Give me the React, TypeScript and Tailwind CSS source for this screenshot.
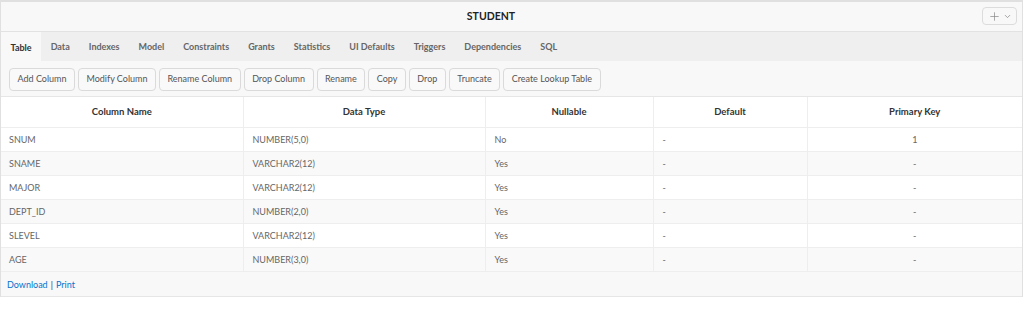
import { Plus, ChevronDown } from 'lucide-react';

const tabs = ['Table', 'Data', 'Indexes', 'Model', 'Constraints', 'Grants', 'Statistics', 'UI Defaults', 'Triggers', 'Dependencies', 'SQL'];

const actions = ['Add Column', 'Modify Column', 'Rename Column', 'Drop Column', 'Rename', 'Copy', 'Drop', 'Truncate', 'Create Lookup Table'];

const rows = [
    { name: 'SNUM', type: 'NUMBER(5,0)', nullable: 'No', def: '-', pk: '1' },
    { name: 'SNAME', type: 'VARCHAR2(12)', nullable: 'Yes', def: '-', pk: '-' },
    { name: 'MAJOR', type: 'VARCHAR2(12)', nullable: 'Yes', def: '-', pk: '-' },
    { name: 'DEPT_ID', type: 'NUMBER(2,0)', nullable: 'Yes', def: '-', pk: '-' },
    { name: 'SLEVEL', type: 'VARCHAR2(12)', nullable: 'Yes', def: '-', pk: '-' },
    { name: 'AGE', type: 'NUMBER(3,0)', nullable: 'Yes', def: '-', pk: '-' },
];

export default function App() {
    return (
        <div className="h-[311px] w-[1024px] bg-white text-[9px] text-[#666]" style={{ fontFamily: 'Lato, "Noto Sans", sans-serif' }}>
            <div className="w-[1023px] border-x border-t-2 border-[#e0e0e0]">
                {/* region header */}
                <div className="relative flex h-[30px] items-center border-b border-[#e2e2e2] bg-[#f8f8f8]">
                    <div className="w-[980px] text-center text-[10.5px] font-bold text-[#222]">STUDENT</div>
                    <button className="absolute right-[5px] top-[5px] flex h-[18px] w-[35px] items-center justify-center gap-[2px] rounded-sm border border-[#dcdcdc] bg-[#f8f8f8] text-[#888]">
                        <Plus className="h-[13px] w-[13px]" strokeWidth={1.3} />
                        <ChevronDown className="h-[9px] w-[9px]" strokeWidth={2} />
                    </button>
                </div>

                {/* tabs */}
                <div className="flex h-[29px] bg-[#efefef]">
                    {tabs.map((t, i) => (
                        <div
                            key={t}
                            className={
                                i === 0
                                    ? 'flex h-[30px] items-center bg-[#f8f8f8] px-[9.5px] pt-px font-bold text-[#333]'
                                    : 'flex items-center px-[9.5px] pt-px font-bold text-[#666]'
                            }
                        >
                            {t}
                        </div>
                    ))}
                </div>

                {/* toolbar */}
                <div className="flex h-[36px] items-center gap-[3px] border-b border-[#e6e6e6] bg-[#f8f8f8] px-[8px] pt-px">
                    {actions.map((a) => (
                        <button key={a} className="h-[23px] rounded-sm border border-[#dadada] bg-[#f9f9f9] px-[7.5px] text-[#555]">
                            {a}
                        </button>
                    ))}
                </div>

                {/* columns table */}
                <table className="w-full table-fixed border-collapse">
                    <colgroup>
                        <col className="w-[242px]" />
                        <col className="w-[242px]" />
                        <col className="w-[168px]" />
                        <col className="w-[154px]" />
                        <col />
                    </colgroup>
                    <thead>
                        <tr className="h-[30px] border-b border-[#eeeeee] bg-white text-[9.5px]">
                            <th className="border-r border-[#eeeeee] pt-px font-bold text-[#333]">Column Name</th>
                            <th className="border-r border-[#eeeeee] pt-px font-bold text-[#333]">Data Type</th>
                            <th className="border-r border-[#eeeeee] pt-px font-bold text-[#333]">Nullable</th>
                            <th className="border-r border-[#eeeeee] pt-px font-bold text-[#333]">Default</th>
                            <th className="pt-px font-bold text-[#333]">Primary Key</th>
                        </tr>
                    </thead>
                    <tbody>
                        {rows.map((r, i) => (
                            <tr key={r.name} className={`h-[24px] border-b border-[#eeeeee] ${i % 2 === 1 ? 'bg-[#f9f9f9]' : 'bg-white'}`}>
                                <td className="border-r border-[#eeeeee] px-[8px] pt-[2px]">{r.name}</td>
                                <td className="border-r border-[#eeeeee] px-[9px] pt-[2px]">{r.type}</td>
                                <td className="border-r border-[#eeeeee] px-[9px] pt-[2px]">{r.nullable}</td>
                                <td className="border-r border-[#eeeeee] px-[9px] pt-[2px]">{r.def}</td>
                                <td className="pt-[2px] text-center">{r.pk}</td>
                            </tr>
                        ))}
                    </tbody>
                </table>

                {/* footer */}
                <div className="flex h-[25px] items-center border-b border-[#e6e6e6] bg-[#f8f8f8] px-[6px] pt-[2px]">
                    <a className="text-[#0572ce]">Download</a>
                    <span className="px-[3px] text-[#333]">|</span>
                    <a className="text-[#0572ce]">Print</a>
                </div>
            </div>
        </div>
    );
}
